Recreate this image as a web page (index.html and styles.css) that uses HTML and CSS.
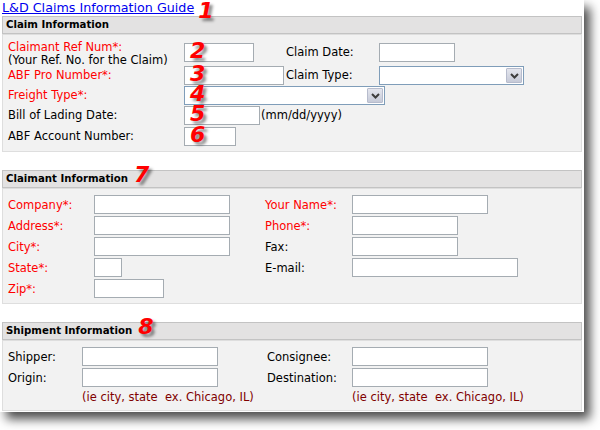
FILE: index.html
```html
<!DOCTYPE html>
<html lang="en">
<head>
  <meta charset="UTF-8" />
  <title>Loss &amp; Damage Claim</title>
  <link rel="stylesheet" href="styles.css">
</head>
<body>

<div class="page">

  <div class="top">
    <a href="#">L&amp;D Claims Information Guide</a>
    <span class="mark mark-top">1</span>
  </div>

  <!-- claim -->
  <div class="sect">
    <div class="hdr">Claim Information</div>
    <div class="bd claim">
      <div class="row r1">
        <div class="lbl req two">Claimant Ref Num*:<br><span class="note">(Your Ref. No. for the Claim)</span></div>
        <div class="cell">
          <span class="field"><input type="text" class="w70"><span class="mark">2</span></span>
        </div>
        <div class="lbl2">Claim Date:</div>
        <input type="text" class="w76 off">
      </div>
      <div class="row r2">
        <div class="lbl req">ABF Pro Number*:</div>
        <div class="cell">
          <span class="field"><input type="text" class="w100"><span class="mark">3</span></span>
        </div>
        <div class="lbl2">Claim Type:</div>
        <div class="sel w145">
          <select></select>
          <span class="arrow"><svg width="9" height="6" viewBox="0 0 9 6"><polyline points="1,1 4.5,4.5 8,1" fill="none" stroke="#3d3d3d" stroke-width="2"/></svg></span>
        </div>
      </div>
      <div class="row r3">
        <div class="lbl req">Freight Type*:</div>
        <span class="field">
          <div class="sel w201">
            <select></select>
            <span class="arrow"><svg width="9" height="6" viewBox="0 0 9 6"><polyline points="1,1 4.5,4.5 8,1" fill="none" stroke="#3d3d3d" stroke-width="2"/></svg></span>
          </div>
          <span class="mark">4</span>
        </span>
      </div>
      <div class="row r4">
        <div class="lbl">Bill of Lading Date:</div>
        <span class="field"><input type="text" class="w76"><span class="mark">5</span></span>
        <span class="fmt">(mm/dd/yyyy)</span>
      </div>
      <div class="row r5">
        <div class="lbl">ABF Account Number:</div>
        <span class="field"><input type="text" class="w52"><span class="mark">6</span></span>
      </div>
    </div>
  </div>

  <!-- claimant -->
  <div class="sect">
    <div class="hdr">Claimant Information <span class="mark mark-hdr">7</span></div>
    <div class="bd cols">
      <div class="col left2">
        <div class="frow"><label class="req">Company*:</label><input type="text" class="w136"></div>
        <div class="frow"><label class="req">Address*:</label><input type="text" class="w136"></div>
        <div class="frow"><label class="req">City*:</label><input type="text" class="w136"></div>
        <div class="frow"><label class="req">State*:</label><input type="text" class="w28"></div>
        <div class="frow"><label class="req">Zip*:</label><input type="text" class="w70"></div>
      </div>
      <div class="col right2">
        <div class="frow"><label class="req">Your Name*:</label><input type="text" class="w136"></div>
        <div class="frow"><label class="req">Phone*:</label><input type="text" class="w106"></div>
        <div class="frow"><label>Fax:</label><input type="text" class="w106"></div>
        <div class="frow"><label>E-mail:</label><input type="text" class="w166"></div>
      </div>
    </div>
  </div>

  <!-- shipment -->
  <div class="sect last">
    <div class="hdr">Shipment Information <span class="mark mark-hdr">8</span></div>
    <div class="bd cols ship">
      <div class="col left3">
        <div class="frow"><label>Shipper:</label><input type="text" class="w136"></div>
        <div class="frow"><label>Origin:</label><input type="text" class="w136"></div>
        <div class="hint">(ie city, state&nbsp; ex. Chicago, IL)</div>
      </div>
      <div class="col right3">
        <div class="frow"><label>Consignee:</label><input type="text" class="w136"></div>
        <div class="frow"><label>Destination:</label><input type="text" class="w136"></div>
        <div class="hint">(ie city, state&nbsp; ex. Chicago, IL)</div>
      </div>
    </div>
  </div>

</div>

</body>
</html>
```

FILE: styles.css
```css
* { box-sizing: border-box; }
html { height: 100%; }
body {
  margin: 0;
  min-height: 100%;
  background: #fff;
  font-family: 'DejaVu Sans', Verdana, sans-serif;
  font-size: 11.5px;
  color: #000;
}

.page {
  width: 584px;
  height: 412px;
  background: #fff;
  box-shadow: 6px 7px 10px rgba(0, 0, 0, 0.7);
}

.top {
  height: 16px;
  padding-left: 2px;
  display: flex;
  align-items: flex-start;
}

.top a {
  font-size: 12.7px;
  line-height: 15px;
  color: #00e;
  text-decoration: underline;
}

/* red annotation numbers */
.mark {
  position: absolute;
  left: 6px;
  top: -1px;
  font: italic bold 22px 'DejaVu Sans', sans-serif;
  line-height: 18px;
  color: #f00;
  text-shadow: 3px 3px 3px rgba(0, 0, 0, 0.45);
  pointer-events: none;
}

.mark-top {
  position: static;
  margin: 2px 0 0 4px;
}

.mark-hdr {
  left: auto;
  top: -5px;
  margin-left: 6px;
  position: relative;
}

.sect {
  margin: 0 2px 18px 2px;
}

.sect.last {
  margin-bottom: 0;
}

.hdr {
  height: 18px;
  padding-left: 3px;
  background: #e3e2e2;
  border: 1px solid #c3c3c3;
  font-weight: bold;
  font-size: 10.2px;
  line-height: 16px;
  display: flex;
  align-items: flex-start;
}

.bd {
  background: #f2f2f2;
  border: 1px solid #dedede;
}

.claim {
  padding: 6px 0 5px 5px;
}

.row {
  display: flex;
  align-items: flex-start;
}

.r1 { height: 25px; }
.r2 { height: 20px; }
.r3 { height: 20px; }
.r4 { height: 21px; }
.r5 { height: 19px; }

.lbl {
  width: 176px;
  line-height: 19px;
  flex: none;
}

.lbl.two {
  line-height: 13px;
}

.r1 .cell,
.r1 .lbl2,
.r1 > input {
  margin-top: 2px;
}

.cell {
  width: 102px;
  flex: none;
}

.lbl2 {
  width: 93px;
  line-height: 19px;
  flex: none;
}

.req { color: #f00; }
.note { color: #000; }

.fmt {
  line-height: 19px;
  margin-left: 1px;
}

.field {
  position: relative;
  display: inline-block;
  vertical-align: top;
}

input {
  display: block;
  height: 19px;
  margin: 0;
  padding: 1px 3px;
  border: 1px solid #a5acb2;
  background: #fff;
  font: inherit;
  outline: none;
}

.w28 { width: 28px; }
.w52 { width: 52px; }
.w70 { width: 70px; }
.w76 { width: 76px; }
.w100 { width: 100px; }
.w106 { width: 106px; }
.w136 { width: 136px; }
.w145 { width: 145px; }
.w166 { width: 166px; }
.w201 { width: 201px; }

.sel {
  display: flex;
  height: 19px;
  border: 1px solid #7f9db9;
  background: #fff;
  padding: 1px;
}

.sel select {
  flex: 1;
  min-width: 0;
  border: none;
  background: transparent;
  appearance: none;
  -webkit-appearance: none;
  outline: none;
}

.arrow {
  width: 16px;
  height: 15px;
  flex: none;
  display: flex;
  align-items: center;
  justify-content: center;
  background: linear-gradient(#e4e6ee, #c6cad8);
  border: 1px solid #b7bccd;
  border-radius: 1px;
}

/* two-column sections */
.cols {
  display: flex;
  padding: 6px 0 5px 5px;
}

.col {
  display: flex;
  flex-direction: column;
  gap: 2px;
}

.left2 { width: 257px; }
.left3 { width: 259px; }

.frow {
  display: flex;
  align-items: center;
  height: 19px;
}

.frow label {
  flex: none;
}

.left2 label { width: 86px; }
.right2 label { width: 87px; }
.left3 label { width: 74px; }
.right3 label { width: 85px; }

.ship {
  padding-bottom: 6px;
}

.hint {
  margin-top: 2px;
  line-height: 13px;
  color: #800000;
}

.left3 .hint { padding-left: 74px; }
.right3 .hint { padding-left: 85px; }
```
